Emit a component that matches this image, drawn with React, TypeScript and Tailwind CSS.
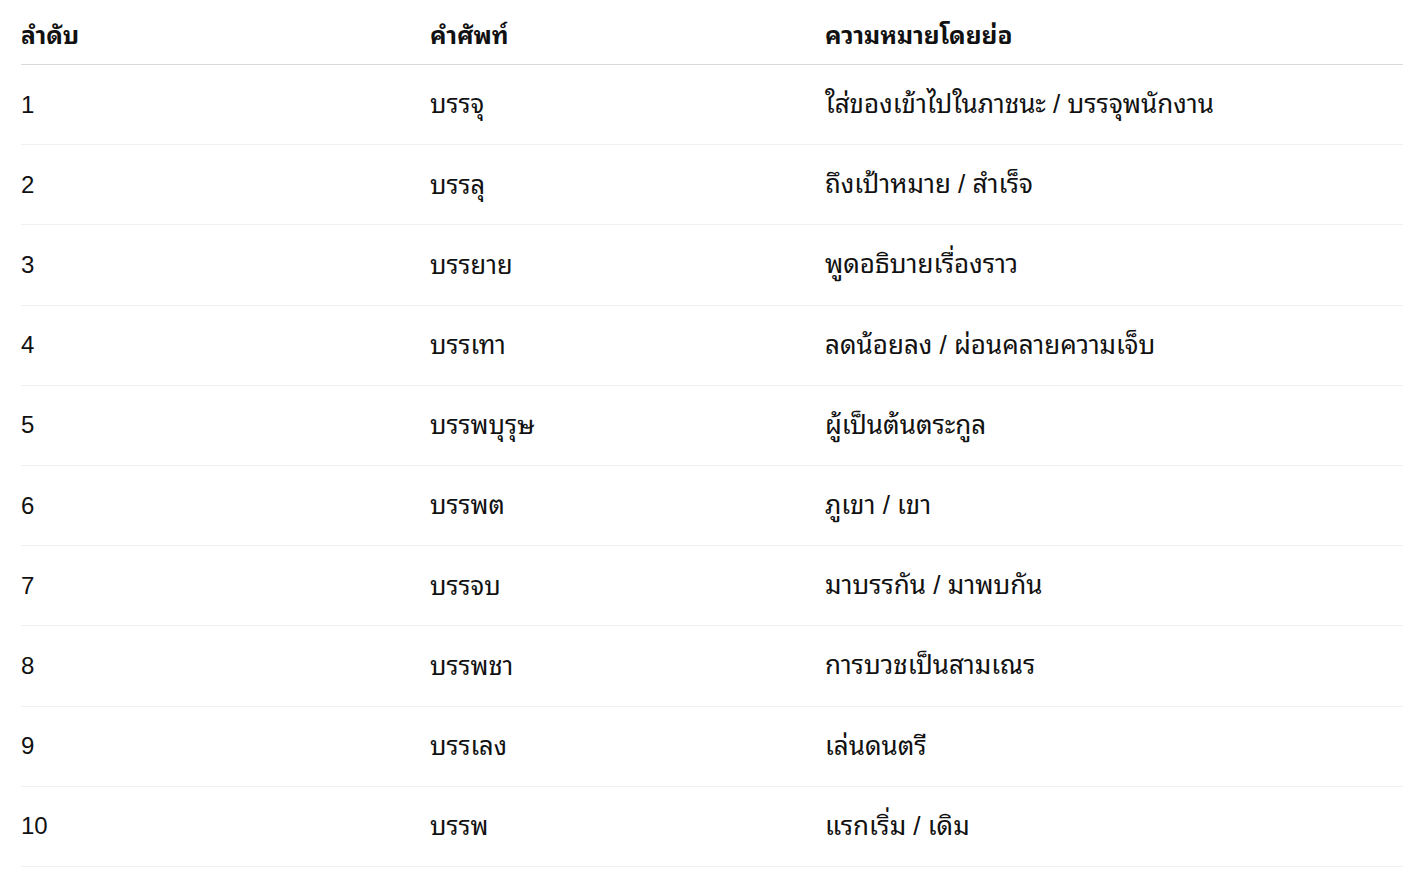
import React from "react";

const rows: [string, string, string][] = [
  ["1", "บรรจุ", "ใส่ของเข้าไปในภาชนะ / บรรจุพนักงาน"],
  ["2", "บรรลุ", "ถึงเป้าหมาย / สำเร็จ"],
  ["3", "บรรยาย", "พูดอธิบายเรื่องราว"],
  ["4", "บรรเทา", "ลดน้อยลง / ผ่อนคลายความเจ็บ"],
  ["5", "บรรพบุรุษ", "ผู้เป็นต้นตระกูล"],
  ["6", "บรรพต", "ภูเขา / เขา"],
  ["7", "บรรจบ", "มาบรรกัน / มาพบกัน"],
  ["8", "บรรพชา", "การบวชเป็นสามเณร"],
  ["9", "บรรเลง", "เล่นดนตรี"],
  ["10", "บรรพ", "แรกเริ่ม / เดิม"],
];

export default function App() {
  return (
    <div
      className="min-h-screen bg-white text-[#111111] px-[21px] pt-[8px]"
      style={{
        fontFamily:
          '"Liberation Sans", "Noto Sans Thai Looped", "Noto Serif Thai", Garuda, Loma, Waree, Kinnari, "Tlwg Typo", "Noto Sans Thai", "Noto Sans", sans-serif',
      }}
    >
      <div className="w-[1382px]">
        <div className="flex h-[57px] items-center border-b border-[#d9d9d9] text-[24.5px] font-bold">
          <div className="w-[409px]">ลำดับ</div>
          <div className="w-[395px]">คำศัพท์</div>
          <div className="flex-1">ความหมายโดยย่อ</div>
        </div>
        {rows.map((r) => (
          <div
            key={r[0]}
            className="flex h-[80.2px] items-center border-b border-[#f0f0f0] text-[24px]"
          >
            <div className="w-[409px]">{r[0]}</div>
            <div className="w-[395px] text-[25.5px]">{r[1]}</div>
            <div className="flex-1 text-[26px]">{r[2]}</div>
          </div>
        ))}
      </div>
    </div>
  );
}
